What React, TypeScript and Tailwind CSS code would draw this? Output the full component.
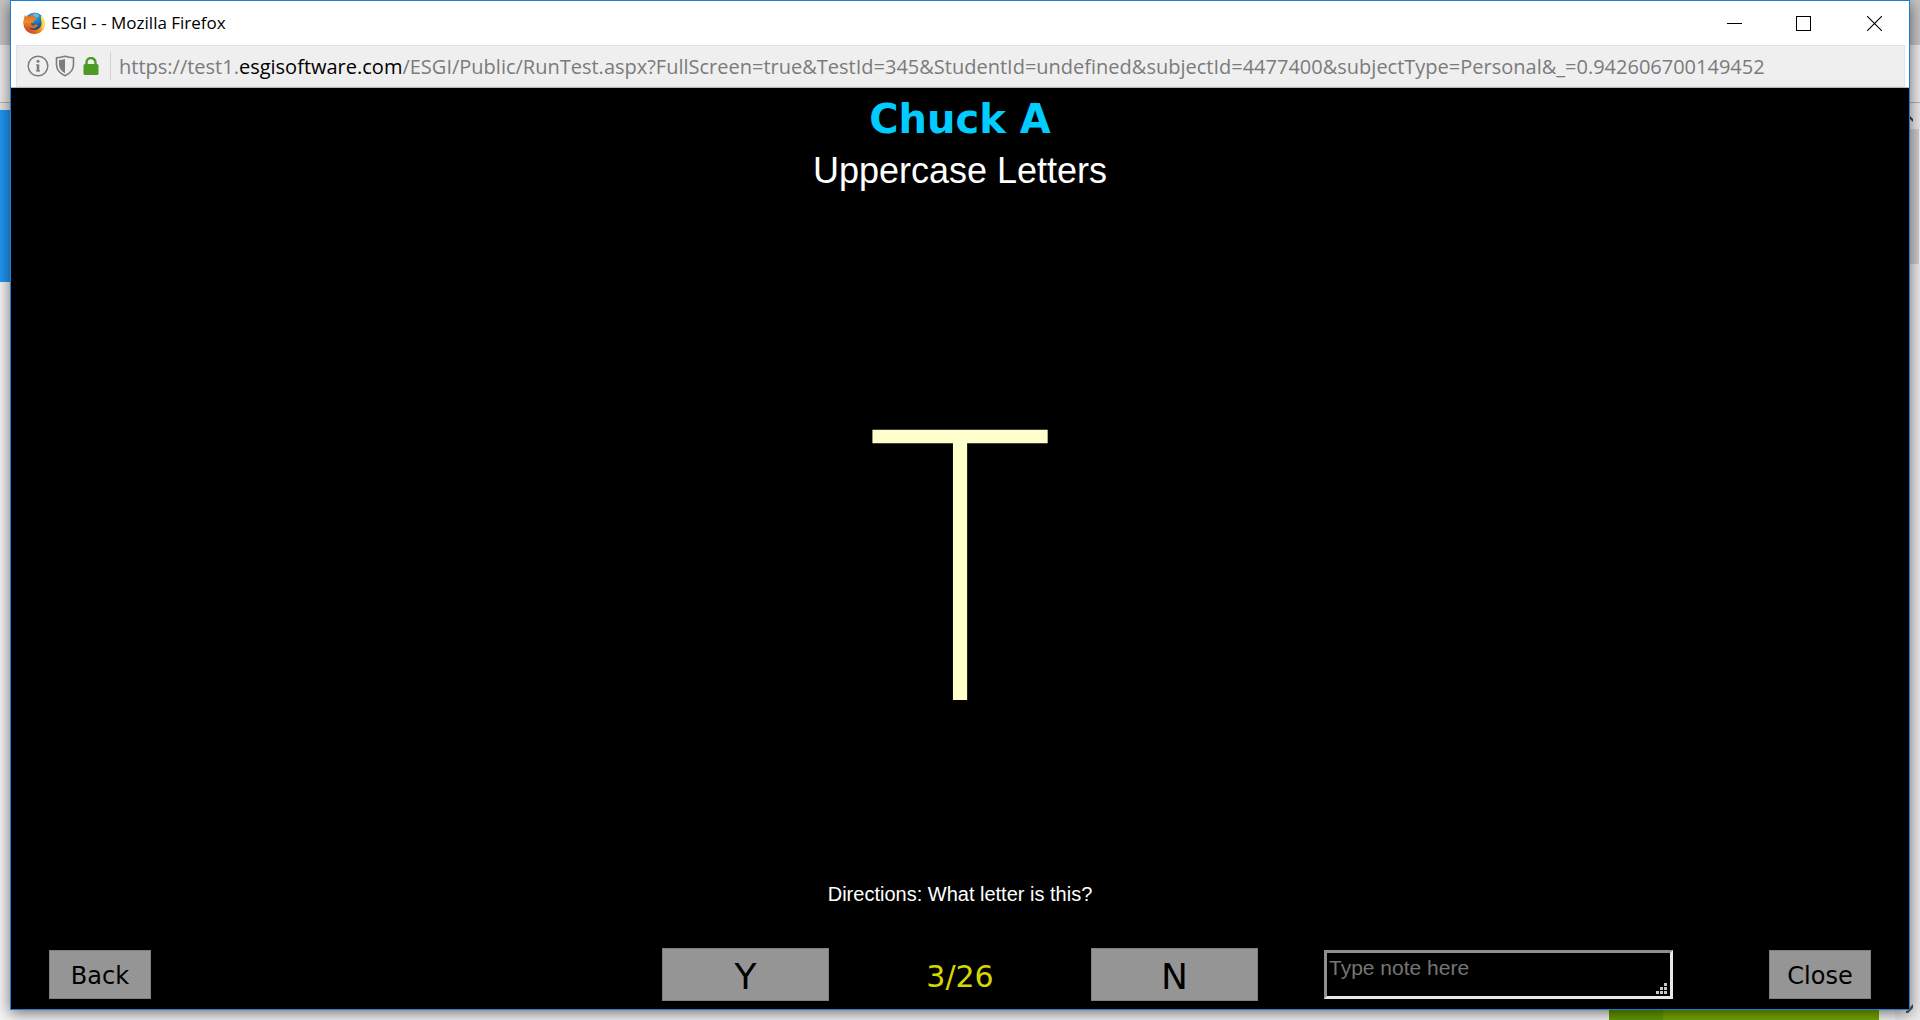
import { useState } from "react";

function FirefoxLogo() {
  return (
    <svg viewBox="0 0 44 44" className="size-[22px] shrink-0" aria-hidden="true">
      <defs>
        <radialGradient id="globe" cx="0.5" cy="0.15" r="0.9">
          <stop offset="0" stopColor="#3fb2e6" />
          <stop offset="0.45" stopColor="#1c79bd" />
          <stop offset="1" stopColor="#12294f" />
        </radialGradient>
        <linearGradient id="tail" x1="0.9" y1="0.1" x2="0.2" y2="0.9">
          <stop offset="0" stopColor="#fff27a" />
          <stop offset="0.3" stopColor="#fbc42d" />
          <stop offset="0.65" stopColor="#ee7d22" />
          <stop offset="1" stopColor="#cf3f1e" />
        </linearGradient>
        <linearGradient id="head" x1="0.5" y1="0" x2="0.4" y2="1">
          <stop offset="0" stopColor="#e86a1d" />
          <stop offset="0.5" stopColor="#f08a24" />
          <stop offset="1" stopColor="#d4471d" />
        </linearGradient>
      </defs>
      <circle cx="23" cy="20" r="19" fill="url(#globe)" />
      <path d="M22 3c5 0 9 2 11 5-2 1-3 3-6 3-2-2-5-2-6-5z" fill="#7fd0ee" opacity="0.6" />
      <path
        d="M36 6c5 4 8 10 8 17 0 12-9 21-21 21C11 44 1 35 1 23c0-3 0-5 1-8l8 12c2 6 7 9 13 9 8 0 14-6 14-14 0-6-2-10-1-16z"
        fill="url(#tail)"
      />
      <path d="M37 8c4 4 6 9 6 15 0 6-3 12-7 15 3-5 4-10 3-16-1-5-3-8-2-14z" fill="#fde35a" />
      <path
        d="M2 15c0-4 1-7 3-10 0 2 0 3 1 4 3-1 6-1 9 0 1-2 3-4 6-5-1 3-1 6 1 7l5 1c1 1-1 3-4 5-2 1-2 3-2 5-2 0-4-1-5 0-1 4 3 6 6 5 3 0 4-2 7-1 1 1 0 3-2 4-4 4-10 4-14 1l2 6C6 34 1 27 1 20z"
        fill="url(#head)"
      />
    </svg>
  );
}

function InfoIcon() {
  return (
    <svg viewBox="0 0 22 22" className="size-[22px]" fill="none" aria-hidden="true">
      <circle cx="11" cy="11" r="9.8" stroke="#7d7d7d" strokeWidth="1.5" />
      <circle cx="11" cy="6.2" r="1.5" fill="#7d7d7d" />
      <path d="M9 10h2M9 15.800h4" stroke="#7d7d7d" strokeWidth="1.200" />
      <path d="M11 9.400v7" stroke="#7d7d7d" strokeWidth="2.600" />
    </svg>
  );
}

function ShieldIcon() {
  return (
    <svg viewBox="0 0 20 22" className="h-[22px] w-5" fill="none" aria-hidden="true">
      <path
        d="M1.5 2.8C4.500 2.600 7.500 2 10 1.200c2.500 .8 5.500 1.400 8.500 1.600v7c0 5-3.500 8.700-8.500 11-5-2.300-8.500-6-8.500-11z"
        stroke="#7d7d7d"
        strokeWidth="1.600"
        strokeLinejoin="round"
      />
      <path d="M10 4v14.200c-3.800-2-6-4.800-6-8.400V5c2-.1 4-.5 6-1z" fill="#7d7d7d" />
    </svg>
  );
}

function LockIcon() {
  return (
    <svg viewBox="0 0 16 18" className="h-[18px] w-4" fill="none" aria-hidden="true">
      <path d="M3.500 8V5.500a4.500 4.500 0 0 1 9 0V8" stroke="#4d9b26" strokeWidth="2.400" />
      <rect x="0.500" y="7" width="15" height="11" rx="1.500" fill="#4d9b26" />
    </svg>
  );
}

function TitleBar() {
  return (
    <header className="flex h-11 shrink-0 items-center bg-white pl-3">
      <FirefoxLogo />
      <h1 className="flex-1 pl-1.5 text-[17px] leading-6 text-black">ESGI - - Mozilla Firefox</h1>
      <div className="flex h-full items-stretch">
        <button type="button" aria-label="Minimize" className="flex w-[68px] items-center justify-center">
          <svg viewBox="0 0 15 15" className="size-[15px]" shapeRendering="crispEdges" aria-hidden="true">
            <path d="M0 7.500h15" stroke="#000" />
          </svg>
        </button>
        <button type="button" aria-label="Maximize" className="flex w-[71px] items-center justify-center">
          <svg viewBox="0 0 15 15" className="size-[15px]" shapeRendering="crispEdges" fill="none" aria-hidden="true">
            <rect x="0.500" y="0.500" width="14" height="14" stroke="#000" />
          </svg>
        </button>
        <button type="button" aria-label="Close window" className="flex w-[70px] items-center justify-center">
          <svg viewBox="0 0 15 15" className="size-[15px]" aria-hidden="true">
            <path d="M0 0l15 15M15 0L0 15" stroke="#000" strokeWidth="1.100" />
          </svg>
        </button>
      </div>
    </header>
  );
}

function AddressBar() {
  return (
    <div className="shrink-0 border-b border-[#b8b8b8] bg-white pr-1 pl-[5px]">
      <div className="flex h-[42px] items-center border border-[#e2e2e2] bg-[#efefef] pl-2.5">
        <div className="flex items-center">
          <InfoIcon />
          <span className="pl-1.5">
            <ShieldIcon />
          </span>
          <span className="pl-2">
            <LockIcon />
          </span>
        </div>
        <div className="ml-[11px] h-7 w-px bg-[#d2d2d2]" />
        <p className="pt-0.5 pl-2 text-[20px] leading-7 whitespace-nowrap text-[#7b7b7b]">
          https://test1.<span className="text-black">esgisoftware.com</span>
          /ESGI/Public/RunTest.aspx?FullScreen=true&amp;TestId=345&amp;StudentId=undefined&amp;subjectId=4477400&amp;subjectType=Personal&amp;_=0.942606700149452
        </p>
      </div>
    </div>
  );
}

function GripDots() {
  return (
    <svg viewBox="0 0 11 11" className="size-[11px]" fill="#c8c8c8" shapeRendering="crispEdges" aria-hidden="true">
      <path d="M8 0h3v3h-3zM8 4h3v3h-3zM8 8h3v3h-3zM4 4h3v3h-3zM4 8h3v3h-3zM0 8h3v3h-3z" />
    </svg>
  );
}

function AnswerBar() {
  const [note, setNote] = useState("");
  return (
    <footer className="grid shrink-0 grid-cols-[1fr_auto_1fr] items-center px-[38px] pb-2 font-['DejaVu_Sans',sans-serif]">
      <div>
        <button type="button" className="h-[49px] w-[102px] border border-[#7f7f7f] bg-[#959595] pt-0.5 text-[24px] leading-8 text-black">
          Back
        </button>
      </div>
      <div className="flex items-center">
        <button type="button" className="h-[53px] w-[167px] border border-[#7f7f7f] bg-[#959595] pt-1 text-[36px] leading-10 text-black">
          Y
        </button>
        <p className="w-[262px] pt-1 text-center text-[30px] leading-10 text-[#d6d600]">3/26</p>
        <button type="button" className="h-[53px] w-[167px] border border-[#7f7f7f] bg-[#959595] pt-1 text-[36px] leading-10 text-black">
          N
        </button>
      </div>
      <div className="flex items-center justify-between pl-[66px]">
        <div className="relative h-[49px] w-[349px]">
          <textarea
            aria-label="Note"
            placeholder="Type note here"
            value={note}
            onChange={(e) => setNote(e.target.value)}
            className="block size-full resize-none overflow-hidden border-[3px] border-t-[#8f8f8f] border-r-[#e8e8e8] border-b-[#e8e8e8] border-l-[#8f8f8f] bg-black px-0.5 font-['Liberation_Sans',sans-serif] text-[21px] leading-[30px] text-white outline-none placeholder:text-[#757575]"
          />
          <span className="pointer-events-none absolute right-1.5 bottom-[5px] leading-none">
            <GripDots />
          </span>
        </div>
        <button type="button" className="h-[49px] w-[102px] border border-[#7f7f7f] bg-[#959595] pt-0.5 text-[24px] leading-8 text-black">
          Close
        </button>
      </div>
    </footer>
  );
}

function TestScreen() {
  return (
    <main className="flex flex-1 flex-col bg-black font-['Liberation_Sans',sans-serif]">
      <div className="pt-[7px] text-center">
        <h2 className="font-['DejaVu_Sans',sans-serif] text-[40px] leading-[48px] font-bold text-[#00ccff]">Chuck A</h2>
        <p className="pt-1 text-[36px] leading-[48px] text-white">Uppercase Letters</p>
      </div>
      <div className="flex flex-1 items-center justify-center pt-16">
        <p className="font-['Roboto_Condensed',Roboto,sans-serif] text-[380px] leading-none font-extralight text-[#ffffcc]">T</p>
      </div>
      <p className="pb-10 text-center text-[20px] leading-7 text-white">Directions: What letter is this?</p>
      <AnswerBar />
    </main>
  );
}

export default function App() {
  return (
    <div className="flex h-screen flex-col overflow-hidden bg-[#f4f4f4] font-['Open_Sans','Noto_Sans',sans-serif]">
      <div className="flex flex-1">
        <div className="flex w-2.5 shrink-0 flex-col">
          <div className="h-[45px] bg-[#c4c4c4]" />
          <div className="h-[58px] border-b border-[#b0b0b0] bg-[#eaeaea]" />
          <div className="h-[7px] bg-[#e4e4e4]" />
          <div className="h-[172px] bg-[#2196f3]" />
        </div>
        <div className="relative flex min-w-0 flex-1 flex-col border border-[#1c7fd6] shadow-[0_3px_14px_rgba(0,0,0,0.55)]">
          <TitleBar />
          <AddressBar />
          <TestScreen />
          <svg viewBox="0 0 7 9" className="absolute -right-1 -bottom-1 h-[9px] w-[7px]" aria-hidden="true">
            <path d="M7 0v4L2 9H0V7l3-1 2-4z" fill="#404040" />
          </svg>
        </div>
        <div className="flex w-2.5 shrink-0 flex-col items-start">
          <div className="h-[45px] w-full bg-[#c4c4c4]" />
          <div className="h-[58px] w-full border-b border-[#b0b0b0] bg-[#eaeaea]" />
          <div className="flex h-[26px] w-full items-center bg-[#eaeaea] pt-1.5">
            <svg viewBox="0 0 3 6" className="h-1.5 w-[3px]" aria-hidden="true">
              <path d="M0 0l3 3v3l-3-3z" fill="#404040" />
            </svg>
          </div>
          <div className="h-[135px] w-[9px] bg-[#cdcdcd]" />
          <div className="w-full flex-1 bg-[#ebebeb]" />
        </div>
      </div>
      <div className="flex h-[10px] shrink-0 justify-end">
        <div className="w-[54px] bg-[#669900]" />
        <div className="w-[216px] bg-[#76a900]" />
        <div className="w-4" />
        <div className="w-[25px] bg-[#ebebeb]" />
      </div>
    </div>
  );
}
